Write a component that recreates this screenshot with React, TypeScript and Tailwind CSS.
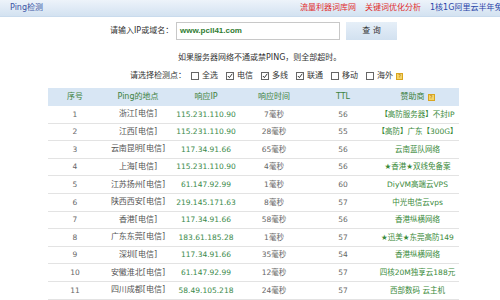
import React from "react";

const rows = [
  ["1", "浙江[电信]", "115.231.110.90", "7毫秒", "56", "【高防服务器】不封IP"],
  ["2", "江西[电信]", "115.231.110.90", "28毫秒", "55", "【高防】广东【300G】"],
  ["3", "云南昆明[电信]", "117.34.91.66", "65毫秒", "56", "云南蓝队网络"],
  ["4", "上海[电信]", "115.231.110.90", "4毫秒", "56", "★香港★双线免备案"],
  ["5", "江苏扬州[电信]", "61.147.92.99", "1毫秒", "60", "DiyVM高端云VPS"],
  ["6", "陕西西安[电信]", "219.145.171.63", "8毫秒", "57", "中光电信云vps"],
  ["7", "香港[电信]", "117.34.91.66", "58毫秒", "56", "香港纵横网络"],
  ["8", "广东东莞[电信]", "183.61.185.28", "1毫秒", "57", "★迅美★东莞高防149"],
  ["9", "深圳[电信]", "117.34.91.66", "35毫秒", "54", "香港纵横网络"],
  ["10", "安徽淮北[电信]", "61.147.92.99", "12毫秒", "57", "四核20M独享云188元"],
  ["11", "四川成都[电信]", "58.49.105.218", "24毫秒", "57", "西部数码 云主机"],
];

const checks = [
  { label: "全选", on: false },
  { label: "电信", on: true },
  { label: "多线", on: true },
  { label: "联通", on: true },
  { label: "移动", on: false },
  { label: "海外", on: false },
];

function Box({ on }: { on: boolean }) {
  return (
    <span className="w-[8px] h-[8px] border border-[#666] bg-white flex items-center justify-center">
      {on && (
        <svg width="8" height="8" viewBox="0 0 8 8">
          <path d="M1.2 4 L3.2 6.2 L7 1" fill="none" stroke="#222" strokeWidth="1.2" />
        </svg>
      )}
    </span>
  );
}

function HelpIcon() {
  return (
    <span className="w-[7px] h-[7px] bg-[#f5d56a] border border-[#d9a520] text-[5px] leading-none text-[#a06000] flex items-center justify-center">
      ?
    </span>
  );
}

export default function App() {
  return (
    <div
      className="w-[500px] h-[300px] overflow-hidden bg-white text-[8px] text-[#444]"
      style={{ fontFamily: '"DejaVu Sans", "Noto Sans CJK SC", sans-serif' }}
    >
      {/* top bar */}
      <div className="h-[17px] flex items-center bg-gradient-to-b from-[#edf3fa] to-[#d3e2f1] border-b border-[#c9dbed] whitespace-nowrap">
        <span className="pl-[10px] text-[#3953a4]">Ping检测</span>
        <div className="ml-[257px] flex items-center gap-[9px]">
          <span className="text-[#e02b2b]">流量利器词库网</span>
          <span className="text-[#e02b2b]">关键词优化分析</span>
          <span className="text-[#2a44a8]">1核1G阿里云半年免费</span>
        </div>
      </div>

      {/* input row */}
      <div className="flex items-center mt-[5px] h-[18px]">
        <span className="pl-[110px] w-[176px] text-[#333]">请输入IP或域名：</span>
        <div className="w-[164px] h-[18px] border border-[#c8c8c8] flex items-center pl-[3px] font-bold text-[#2f7d32]" style={{ fontFamily: '"Liberation Sans", sans-serif' }}>
          www.pcll41.com
        </div>
        <div className="ml-[6px] w-[51px] h-[18px] bg-gradient-to-b from-[#e6eff8] to-[#d2e1f0] flex items-center justify-center text-[#333]">
          查 询
        </div>
      </div>

      {/* notice */}
      <div className="mt-[12px] pl-[178px] text-[#333]">如果服务器网络不通或禁PING，则全部超时。</div>

      {/* checkboxes */}
      <div className="mt-[6px] pl-[130px] flex items-center text-[#333]">
        <span>请选择检测点：</span>
        {checks.map((c) => (
          <span key={c.label} className="flex items-center gap-[3px] ml-[5px] mr-[3px]">
            <Box on={c.on} />
            <span>{c.label}</span>
          </span>
        ))}
        <HelpIcon />
      </div>

      {/* table */}
      <div className="mt-[6px] ml-[48px] w-[411px]">
        <div className="grid grid-cols-[54px_72px_64px_72px_66px_83px] h-[18px] bg-[#d8e6f4] text-[#3e8240] items-center text-center">
          <span>序号</span>
          <span>Ping的地点</span>
          <span>响应IP</span>
          <span>响应时间</span>
          <span>TTL</span>
          <span className="flex items-center justify-center gap-[3px]">
            赞助商 <HelpIcon />
          </span>
        </div>
        {rows.map((r) => (
          <div
            key={r[0]}
            className="grid grid-cols-[54px_72px_64px_72px_66px_83px] h-[17.6px] border-b border-[#e3e3e3] items-center text-center whitespace-nowrap"
          >
            <span className="text-[#666] text-[7.5px]">{r[0]}</span>
            <span className="text-[#555]">{r[1]}</span>
            <span className="text-[#3a8a4a] text-[7.5px]">{r[2]}</span>
            <span className="text-[#666] text-[7.5px]">{r[3]}</span>
            <span className="text-[#666] text-[7.5px]">{r[4]}</span>
            <span className="text-[#3a8a3a] text-[7.5px]">{r[5]}</span>
          </div>
        ))}
      </div>
    </div>
  );
}
